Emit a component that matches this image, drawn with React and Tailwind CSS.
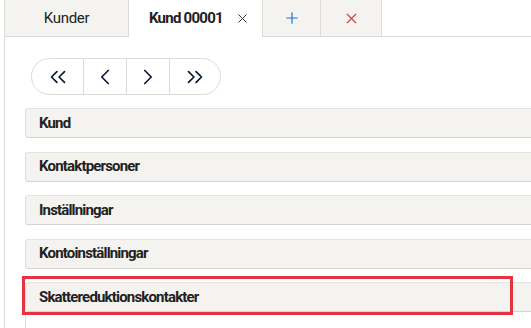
import { ChevronsLeft, ChevronLeft, ChevronRight, ChevronsRight, X, Plus } from 'lucide-react'

const sections = ['Kund', 'Kontaktpersoner', 'Inställningar', 'Kontoinställningar']

function SectionHeader({ title }) {
  return (
    <div className="h-[30px] shrink-0 flex items-center pl-[13px] bg-[#f4f3f0] border-t border-b border-l border-t-[#e6e4e0] border-b-[#d6d4d0] border-l-[#dedcd8] rounded-l-[3px]">
      <span className="text-[15px] font-bold text-[#222] tracking-[-0.055em]">{title}</span>
    </div>
  )
}

function App() {
  const pager = [
    { icon: ChevronsLeft, w: 'w-[51px]' },
    { icon: ChevronLeft, w: 'w-[43px]' },
    { icon: ChevronRight, w: 'w-[43px]' },
    { icon: ChevronsRight, w: 'w-[51px]' },
  ]

  return (
    <div className="w-[531px] h-[328px] overflow-hidden bg-white font-['Roboto',sans-serif]">
      <div className="ml-[4px] h-full border-l border-[#dddbd7]">
        {/* Tabs */}
        <div className="flex h-[37px]">
          <div className="w-[124px] flex items-center justify-center bg-[#f4f3f0] border-r border-b border-[#dddbd7] text-[15px] text-[#222] tracking-[-0.02em]">
            Kunder
          </div>
          <div className="w-[133px] flex items-center pl-[20px] gap-[12px] bg-white">
            <span className="text-[15px] font-bold text-[#222] tracking-[-0.05em]">Kund 00001</span>
            <X size={15} strokeWidth={1.6} className="text-[#333]" />
          </div>
          <div className="w-[59px] flex items-center justify-center bg-[#f4f3f0] border-l border-r border-b border-[#dddbd7]">
            <Plus size={18} strokeWidth={1.6} className="text-[#1b74d1]" />
          </div>
          <div className="w-[61px] flex items-center justify-center bg-[#f4f3f0] border-r border-b border-[#dddbd7]">
            <X size={17} strokeWidth={1.6} className="text-[#e3343f]" />
          </div>
          <div className="flex-1 border-b border-[#dddbd7]" />
        </div>

        {/* Pager */}
        <div className="ml-[26px] mt-[21px] flex h-[37px] w-fit rounded-full border border-[#dddbd7] overflow-hidden">
          {pager.map(({ icon: Icon, w }, i) => (
            <div key={i} className={`${w} flex items-center justify-center ${i > 0 ? 'border-l border-[#dddbd7]' : ''}`}>
              <Icon size={26} strokeWidth={1.6} className="text-[#0f1a36]" />
            </div>
          ))}
        </div>

        {/* Sections */}
        <div className="ml-[20px] mr-[-20px] mt-[13px] flex flex-col gap-[13.5px]">
          {sections.map((s) => (
            <SectionHeader key={s} title={s} />
          ))}
          <div className="relative">
            <SectionHeader title="Skattereduktionskontakter" />
            <div className="h-[40px] border-l border-[#dddbd7]" />
            <div className="absolute left-[-3px] top-[-6px] w-[491px] h-[39px] border-[3px] border-[#e5343f] pointer-events-none" />
          </div>
        </div>
      </div>
    </div>
  )
}

export default App
